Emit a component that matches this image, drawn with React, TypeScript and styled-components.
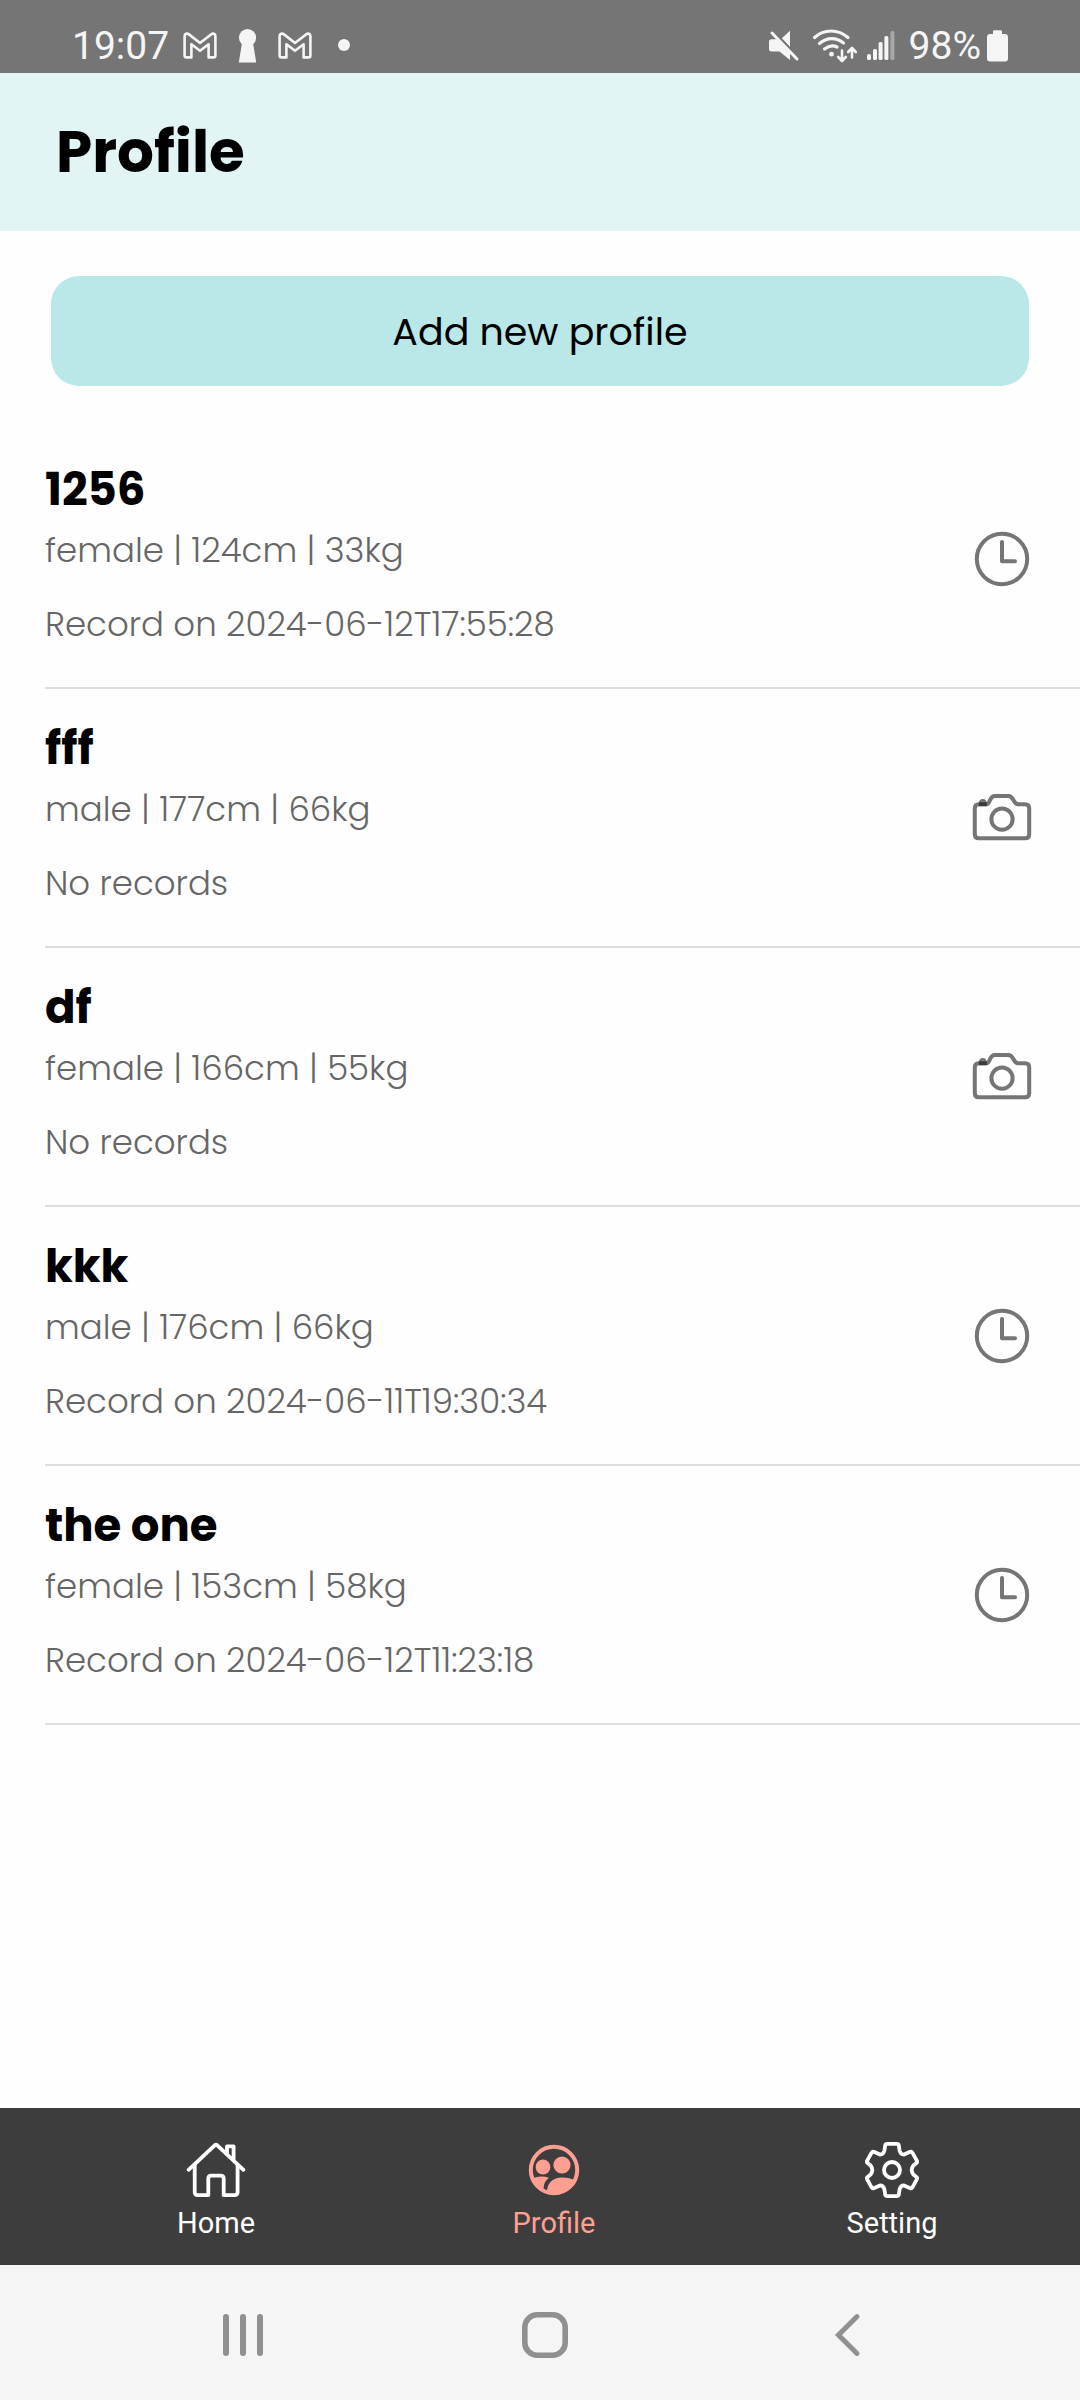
import React from "react";
import styled, { createGlobalStyle } from "styled-components";

const GlobalStyle = createGlobalStyle`
  *, *::before, *::after { box-sizing: border-box; }
  body {
    margin: 0;
    background: #fefefe;
    font-family: Poppins, Inter, "Liberation Sans", sans-serif;
    color: #000;
  }
  button { font: inherit; color: inherit; border: 0; padding: 0; background: none; cursor: pointer; }
  svg { display: block; flex: none; }
`;

const Screen = styled.div`
  display: flex;
  flex-direction: column;
  min-height: 100vh;
`;

const StatusBar = styled.div`
  display: flex;
  justify-content: space-between;
  align-items: center;
  height: 73px;
  padding: 19px 72px 0 72px;
  background: #757575;
  color: #f5f5f5;
  font-family: Roboto, "Liberation Sans", sans-serif;
  font-size: 39px;
  line-height: 48px;
`;

const StatusGroup = styled.div<{ $gap: number }>`
  display: flex;
  align-items: center;
  gap: ${(p) => p.$gap}px;
`;

const Header = styled.header`
  padding: 47px 56px;
  background: #e2f4f4;
`;

const Title = styled.h1`
  margin: 0;
  font-size: 58px;
  line-height: 64px;
  font-weight: 700;
`;

const Main = styled.main`
  flex: 1;
  padding-top: 45px;
`;

const AddRow = styled.div`
  display: flex;
  padding: 0 51px;
  margin-bottom: 44px;
`;

const AddButton = styled.button`
  flex: 1;
  height: 110px;
  border-radius: 28px;
  background: #bae7e7;
  font-size: 38px;
`;

const ProfileList = styled.ul`
  list-style: none;
  margin: 0;
  padding: 0 0 0 45px;
`;

const ProfileRow = styled.li`
  display: flex;
  align-items: center;
  justify-content: space-between;
  padding: 32px 48px 31px 0;
  border-bottom: 2px solid #dedede;
`;

const Details = styled.div`
  display: flex;
  flex-direction: column;
  padding-bottom: 4px;
`;

const Name = styled.h2`
  margin: 0 0 4px;
  font-size: 45px;
  line-height: 56px;
  font-weight: 700;
`;

const Line = styled.p`
  margin: 0;
  font-size: 34px;
  line-height: 56px;
  font-weight: 300;
  color: #666;
  & + & { margin-top: 18px; }
`;

const IconButton = styled.button`
  color: #757575;
`;

const TabBar = styled.nav`
  display: grid;
  grid-template-columns: repeat(3, 1fr);
  padding: 32px 19px 25px 47px;
  background: #3d3d3d;
`;

const Tab = styled.a<{ $active?: boolean }>`
  display: flex;
  flex-direction: column;
  align-items: center;
  gap: 6px;
  color: ${(p) => (p.$active ? "#ff9f92" : "#fff")};
  font-family: Roboto, "Liberation Sans", sans-serif;
  font-size: 29px;
  line-height: 34px;
  text-decoration: none;
`;

const SystemBar = styled.div`
  display: grid;
  grid-template-columns: repeat(3, 1fr);
  justify-items: center;
  padding: 47px 82px 42px 92px;
  background: #f5f5f5;
  color: #909090;
`;

const GmailIcon = () => (
  <svg width="34" height="28" viewBox="0 0 34 28" fill="none" stroke="currentColor" strokeWidth="2.6" strokeLinejoin="round">
    <path d="M1.6 4.2C1.6 1.6 4 .9 6 2.4L17 11L28 2.4C30 .9 32.4 1.6 32.4 4.2V23.5Q32.4 25.4 30.5 25.4H25.6V12.2L17 18.8L8.4 12.2V25.4H3.5Q1.6 25.4 1.6 23.5Z" />
  </svg>
);

const KeyholeIcon = () => (
  <svg width="19" height="34" viewBox="0 0 19 34" fill="currentColor">
    <circle cx="9.5" cy="8.6" r="8.6" />
    <path d="M4 14H15L18.2 33.5H.8Z" />
  </svg>
);

const DotIcon = () => (
  <svg width="22" height="22" viewBox="0 0 22 22" fill="currentColor">
    <circle cx="11" cy="10" r="6" />
  </svg>
);

const MutedIcon = () => (
  <svg width="32" height="32" viewBox="0 0 32 32">
    <path d="M21 .8V17.5L12.6 8.4Z" fill="currentColor" />
    <path d="M2.5 9.2H7.5L21 22V30L10.5 21.5H2.5Q0 21.5 0 19V11.7Q0 9.2 2.5 9.2Z" fill="currentColor" />
    <path d="M3 3L28 29" stroke="currentColor" strokeWidth="3" strokeLinecap="round" />
    <path d="M5.6 1.8L23 20" stroke="#757575" strokeWidth="1.6" />
  </svg>
);

const WifiIcon = () => (
  <svg width="46" height="34" viewBox="0 0 46 34" fill="none" stroke="currentColor" strokeWidth="3.2" strokeLinecap="round">
    <path d="M3.5 8.5C13 -.2 27 -.2 37 8.5" />
    <path d="M8.5 14.5C16 8 25.5 8 32.5 14" />
    <path d="M13.5 20C18 16.3 22.5 16.2 26 18" />
    <circle cx="20.5" cy="25.2" r="2.4" fill="currentColor" stroke="none" />
    <path d="M31 21.5V31M27.2 28L31 32L34.8 28M41 28.5V19.5M37.2 23L41 19L44.8 23" strokeWidth="2.6" strokeLinejoin="round" />
  </svg>
);

const SignalIcon = () => (
  <svg width="28" height="32" viewBox="0 0 28 32" fill="currentColor">
    <rect x="0" y="24" width="4" height="6" rx="1.6" />
    <rect x="6" y="19" width="4" height="11" rx="1.6" />
    <rect x="11.6" y="12" width="4" height="18" rx="1.6" />
    <rect x="17.4" y="6" width="4" height="24" rx="1.6" />
    <rect x="23.4" y="1" width="4" height="29" rx="1.6" opacity=".4" />
  </svg>
);

const BatteryIcon = () => (
  <svg width="21" height="32" viewBox="0 0 21 32" fill="currentColor">
    <path d="M6 1.5Q6 .2 7.3 .2H13.7Q15 .2 15 1.5V4H18Q21 4 21 7V28.5Q21 31.5 18 31.5H3Q0 31.5 0 28.5V7Q0 4 3 4H6Z" />
  </svg>
);

const ClockIcon = () => (
  <svg width="60" height="60" viewBox="0 0 60 60" fill="none" stroke="currentColor" strokeWidth="4" strokeLinecap="round" strokeLinejoin="round">
    <circle cx="30" cy="30" r="25.2" />
    <path d="M30 13V32.2H43" />
  </svg>
);

const CameraIcon = () => (
  <svg width="60" height="60" viewBox="0 0 60 60" fill="none" stroke="currentColor" strokeWidth="4" strokeLinejoin="round">
    <path d="M7 16.2H14.5C18.5 16.2 17 8 23 8H36.5C42 8 41 16.2 46 16.2H53Q57.2 16.2 57.2 20.2V46.2Q57.2 50.2 53.2 50.2H6.8Q2.8 50.2 2.8 46.2V20.2Q2.8 16.2 7 16.2Z" />
    <circle cx="30" cy="31.2" r="10.6" />
    <path d="M6.8 16Q6.8 11 10.8 11Q14.8 11 14.8 16Z" fill="currentColor" stroke="none" />
    <path d="M6.8 14.2H14.8V18.2H6.8Z" fill="#3a3a3a" stroke="none" />
  </svg>
);

const HomeIcon = () => (
  <svg width="60" height="60" viewBox="0 0 60 60" fill="none" stroke="currentColor" strokeWidth="3.8" strokeLinecap="round" strokeLinejoin="round">
    <path d="M2.6 29.8L28.4 5.6Q30 4 31.6 5.6L57.4 29.8" />
    <path d="M8.7 25V52.3Q8.7 55.2 11.7 55.2H22.3V38.7Q22.3 35.7 25.3 35.7H34.7Q37.7 35.7 37.7 38.7V55.2H48.3Q51.6 55.2 51.6 52.3V25" />
    <path d="M41 13V6.4H47.6V20" />
  </svg>
);

const PeopleIcon = () => (
  <svg width="60" height="60" viewBox="0 0 60 60" fill="currentColor">
    <circle cx="30" cy="30" r="23.2" fill="none" stroke="currentColor" strokeWidth="4" />
    <circle cx="19" cy="27" r="7.4" />
    <circle cx="38" cy="25" r="8.6" />
    <path d="M23 52C23 43 29 37.6 38 37.6C44 37.6 49 39 52.5 41.5A25 25 0 0 1 23 52Z" />
    <path d="M7 39.5C12 36 19 36 25 37.8C21 41 19.6 44 19.6 49.5A24 24 0 0 1 7 39.5Z" />
  </svg>
);

const GearIcon = () => (
  <svg width="60" height="60" viewBox="0 0 60 60" fill="none" stroke="currentColor" strokeWidth="3.8" strokeLinejoin="round">
    <path d="M25 3.9H35Q36.6 3.9 36.8 5.4L37.6 10.5Q38.4 14.6 42 14.6L48.2 11.8Q49.6 11.2 50.4 12.6L54.8 20.6Q55.6 22 54.4 23L51.4 25.4Q48 30 51.4 34.6L54.4 37Q55.6 38 54.8 39.4L50.4 47.4Q49.6 48.8 48.2 48.2L42 45.4Q38.4 45.4 37.6 49.5L36.8 54.6Q36.6 56.1 35 56.1H25Q23.4 56.1 23.2 54.6L22.4 49.5Q21.6 45.4 18 45.4L11.8 48.2Q10.4 48.8 9.6 47.4L5.2 39.4Q4.4 38 5.6 37L8.6 34.6Q12 30 8.6 25.4L5.6 23Q4.4 22 5.2 20.6L9.6 12.6Q10.4 11.2 11.8 11.8L18 14.6Q21.6 14.6 22.4 10.5L23.2 5.4Q23.4 3.9 25 3.9Z" />
    <circle cx="30" cy="30" r="8" />
  </svg>
);

const RecentsIcon = () => (
  <svg width="46" height="46" viewBox="0 0 46 46" stroke="currentColor" strokeWidth="6" strokeLinecap="round">
    <path d="M6 5V41M23 5V41M40 5V41" />
  </svg>
);

const SystemHomeIcon = () => (
  <svg width="46" height="46" viewBox="0 0 46 46" fill="none" stroke="currentColor" strokeWidth="5.6">
    <rect x="2.8" y="2.8" width="40.4" height="40.4" rx="12.5" />
  </svg>
);

const BackIcon = () => (
  <svg width="46" height="46" viewBox="0 0 46 46" fill="none" stroke="currentColor" strokeWidth="5" strokeLinecap="round">
    <path d="M33 4.6L14.5 23L33 41.4" />
  </svg>
);

type Profile = {
  name: string;
  gender: "female" | "male";
  height: number;
  weight: number;
  record?: string;
};

const profiles: Profile[] = [
  { name: "1256", gender: "female", height: 124, weight: 33, record: "2024-06-12T17:55:28" },
  { name: "fff", gender: "male", height: 177, weight: 66 },
  { name: "df", gender: "female", height: 166, weight: 55 },
  { name: "kkk", gender: "male", height: 176, weight: 66, record: "2024-06-11T19:30:34" },
  { name: "the one", gender: "female", height: 153, weight: 58, record: "2024-06-12T11:23:18" },
];

export default function App() {
  return (
    <Screen>
      <GlobalStyle />
      <StatusBar>
        <StatusGroup $gap={14}>
          <span>19:07</span>
          <StatusGroup $gap={21}>
            <GmailIcon />
            <KeyholeIcon />
            <GmailIcon />
            <DotIcon />
          </StatusGroup>
        </StatusGroup>
        <StatusGroup $gap={14}>
          <StatusGroup $gap={10}>
            <MutedIcon />
            <WifiIcon />
            <SignalIcon />
          </StatusGroup>
          <StatusGroup $gap={6}>
            <span>98%</span>
            <BatteryIcon />
          </StatusGroup>
        </StatusGroup>
      </StatusBar>

      <Header>
        <Title>Profile</Title>
      </Header>

      <Main>
        <AddRow>
          <AddButton type="button">Add new profile</AddButton>
        </AddRow>
        <ProfileList>
          {profiles.map((p) => (
            <ProfileRow key={p.name}>
              <Details>
                <Name>{p.name}</Name>
                <Line>{`${p.gender} | ${p.height}cm | ${p.weight}kg`}</Line>
                <Line>{p.record ? `Record on ${p.record}` : "No records"}</Line>
              </Details>
              <IconButton type="button" aria-label={p.record ? "History" : "Take photo"}>
                {p.record ? <ClockIcon /> : <CameraIcon />}
              </IconButton>
            </ProfileRow>
          ))}
        </ProfileList>
      </Main>

      <TabBar>
        <Tab href="#home">
          <HomeIcon />
          Home
        </Tab>
        <Tab href="#profile" $active aria-current="page">
          <PeopleIcon />
          Profile
        </Tab>
        <Tab href="#setting">
          <GearIcon />
          Setting
        </Tab>
      </TabBar>

      <SystemBar>
        <button type="button" aria-label="Recent apps"><RecentsIcon /></button>
        <button type="button" aria-label="Device home"><SystemHomeIcon /></button>
        <button type="button" aria-label="Back"><BackIcon /></button>
      </SystemBar>
    </Screen>
  );
}
